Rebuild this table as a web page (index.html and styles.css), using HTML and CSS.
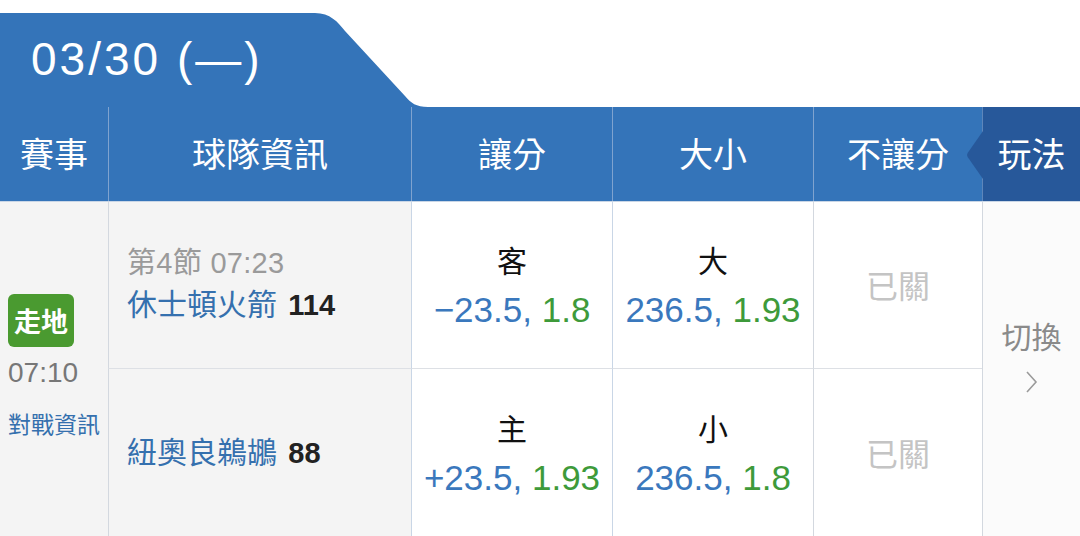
FILE: index.html
```html
<!DOCTYPE html>
<html lang="zh-Hant">
<head>
<meta charset="utf-8">
<title>賽事</title>
<link rel="stylesheet" href="styles.css">
</head>
<body>
<div class="page">
  <div class="tabbar">
    <div class="tab">03/30 (—)</div>
    <svg class="tab-slope" width="113" height="94" viewBox="0 0 113 94" aria-hidden="true">
      <path d="M0,0 C15,0 23,9 30,18 L90,83 C96,90 101,94 113,94 L0,94 Z" fill="#3474b9"/>
    </svg>
  </div>

  <div class="head">
    <div class="hcell">賽事</div>
    <div class="hcell">球隊資訊</div>
    <div class="hcell">讓分</div>
    <div class="hcell">大小</div>
    <div class="hcell">不讓分</div>
    <div class="hcell play">玩法</div>
  </div>

  <div class="body">
    <div class="event">
      <span class="badge">走地</span>
      <span class="etime">07:10</span>
      <span class="elink">對戰資訊</span>
    </div>

    <div class="team top">
      <div class="period">第4節 07:23</div>
      <div class="tname">休士頓火箭 <b>114</b></div>
    </div>
    <div class="odds top">
      <div class="olabel">客</div>
      <div class="oval"><span class="ln">−23.5,</span> <span class="pr">1.8</span></div>
    </div>
    <div class="odds top">
      <div class="olabel">大</div>
      <div class="oval"><span class="ln">236.5,</span> <span class="pr">1.93</span></div>
    </div>
    <div class="closed top">已關</div>

    <div class="switch">
      <span class="swtext">切換</span>
      <svg class="chev" width="14" height="24" viewBox="0 0 14 24" aria-hidden="true">
        <polyline points="2,2 11,12 2,22" fill="none" stroke="#9a9a9a" stroke-width="1.6"/>
      </svg>
    </div>

    <div class="team">
      <div class="tname">紐奧良鵜鶘 <b>88</b></div>
    </div>
    <div class="odds">
      <div class="olabel">主</div>
      <div class="oval"><span class="ln">+23.5,</span> <span class="pr">1.93</span></div>
    </div>
    <div class="odds">
      <div class="olabel">小</div>
      <div class="oval"><span class="ln">236.5,</span> <span class="pr">1.8</span></div>
    </div>
    <div class="closed">已關</div>
  </div>
</div>
</body>
</html>
```

FILE: styles.css
```css
* { box-sizing: border-box; }

html, body {
  margin: 0;
  padding: 0;
  background: #ffffff;
}

body {
  font-family: "Liberation Sans", "Noto Sans CJK TC", sans-serif;
  width: 1080px;
  height: 536px;
  overflow: hidden;
}

.page {
  display: flex;
  flex-direction: column;
}

.tabbar {
  display: flex;
  margin-top: 13px;
  height: 94px;
}

.tab {
  width: 315px;
  height: 94px;
  background: #3474b9;
  color: #ffffff;
  font-size: 46px;
  letter-spacing: 3px;
  display: flex;
  align-items: center;
  padding-left: 31px;
  padding-bottom: 2px;
}

.tab-slope {
  display: block;
}

.head {
  display: grid;
  grid-template-columns: 108px 303px 201px 201px 169px 98px;
  height: 94px;
  background: #3474b9;
}

.hcell {
  display: flex;
  align-items: center;
  justify-content: center;
  color: #ffffff;
  font-size: 34px;
  border-left: 1px solid #7fa3cf;
  position: relative;
  padding-bottom: 4px;
}

.hcell:first-child {
  border-left: none;
}

.hcell.play {
  background: #27589a;
  border-left: 1px solid #5d86bb;
}

.hcell.play::before {
  content: "";
  position: absolute;
  left: -16px;
  top: 24px;
  width: 16px;
  height: 48px;
  background: #27589a;
  clip-path: polygon(100% 0, 4% 46%, 0 50%, 4% 54%, 100% 100%);
}

.body {
  display: grid;
  grid-template-columns: 108px 303px 201px 201px 169px 98px;
  grid-template-rows: 167px 167px;
  border-top: 1px solid #c9d6e6;
  border-bottom: 1px solid #d8dbe0;
}

.event {
  grid-row: 1 / span 2;
  grid-column: 1;
  background: #f4f4f4;
  display: flex;
  flex-direction: column;
  align-items: flex-start;
  justify-content: center;
  padding-left: 8px;
  padding-bottom: 4px;
}

.badge {
  display: flex;
  align-items: center;
  justify-content: center;
  width: 66px;
  height: 53px;
  background: #4a9a30;
  color: #ffffff;
  font-size: 27px;
  font-weight: bold;
  border-radius: 6px;
}

.etime {
  margin-top: 9px;
  font-size: 28px;
  color: #777777;
  line-height: 34px;
}

.elink {
  margin-top: 20px;
  font-size: 23px;
  color: #3570ae;
  line-height: 30px;
}

.team {
  background: #f4f4f4;
  border-left: 1px solid #d3d8df;
  display: flex;
  flex-direction: column;
  justify-content: center;
  padding-left: 18px;
  padding-top: 0;
}

.top {
  border-bottom: 1px solid #dde0e5;
}

.period {
  font-size: 29px;
  color: #9a9a9a;
  line-height: 40px;
  letter-spacing: 0.3px;
}

.tname {
  font-size: 30px;
  color: #3570ae;
  line-height: 44px;
  word-spacing: 3px;
}

.tname b {
  color: #222222;
  font-size: 29px;
}

.odds {
  background: #ffffff;
  border-left: 1px solid #c9d6e6;
  display: flex;
  flex-direction: column;
  align-items: center;
  justify-content: center;
  padding-top: 4px;
}

.olabel {
  font-size: 30px;
  color: #111111;
  line-height: 46px;
}

.oval {
  font-size: 35px;
  line-height: 50px;
  white-space: nowrap;
}

.ln { color: #3a78bd; }
.pr { color: #3e9a3a; }

.closed {
  background: #ffffff;
  border-left: 1px solid #d3d8df;
  display: flex;
  align-items: center;
  justify-content: center;
  font-size: 32px;
  color: #c4c4c4;
  padding-bottom: 2px;
}

.switch {
  grid-row: 1 / span 2;
  grid-column: 6;
  background: #fbfbfb;
  border-left: 1px solid #d3d8df;
  display: flex;
  flex-direction: column;
  align-items: center;
  justify-content: center;
  padding-bottom: 26px;
}

.swtext {
  font-size: 30px;
  color: #8a8a8a;
  line-height: 40px;
}

.chev {
  margin-top: 12px;
  display: block;
}
```
